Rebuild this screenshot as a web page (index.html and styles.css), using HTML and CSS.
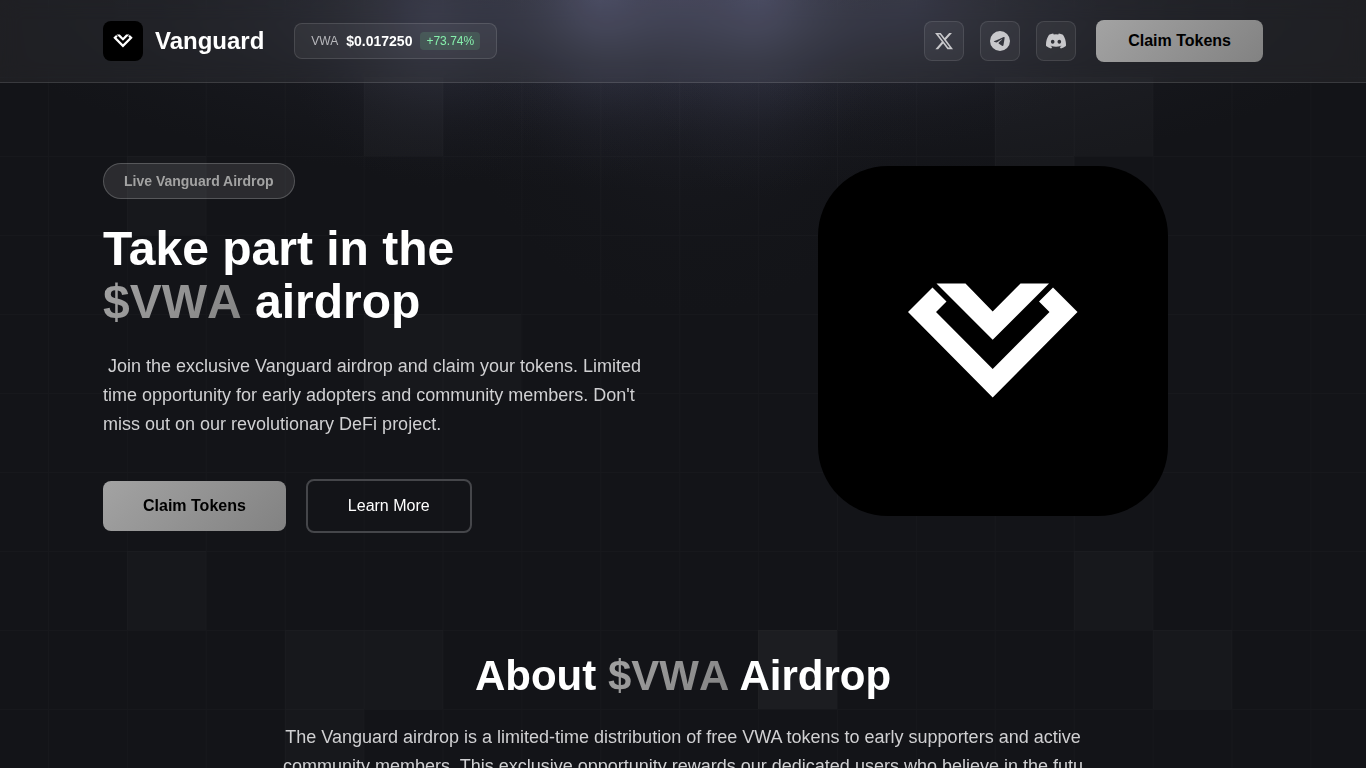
FILE: index.html
```
<!DOCTYPE html>
<html lang="en">
<head>
<meta charset="utf-8">
<meta name="viewport" content="width=device-width, initial-scale=1">
<title>Vanguard Airdrop</title>
<link rel="stylesheet" href="styles.css">
</head>
<body>
<svg class="backdrop" viewBox="0 0 1366 768" preserveAspectRatio="xMidYMin slice" aria-hidden="true">
  <defs>
    <pattern id="grid" x="48" y="77" width="78.9" height="79" patternUnits="userSpaceOnUse">
      <path d="M0 .5H79M.5 0V79" stroke="#fff" stroke-opacity=".014" fill="none"/>
    </pattern>
    <radialGradient id="glow">
      <stop offset="0" stop-color="#62648a" stop-opacity=".62"/>
      <stop offset=".35" stop-color="#50536e" stop-opacity=".34"/>
      <stop offset=".7" stop-color="#404258" stop-opacity=".11"/>
      <stop offset="1" stop-color="#303244" stop-opacity="0"/>
    </radialGradient>
  </defs>
  <rect width="1366" height="768" fill="#131418"/>
  <g fill="url(#glow)">
    <ellipse cx="680" cy="0" rx="720" ry="190" fill-opacity=".75"/>
    <ellipse cx="600" cy="-20" rx="130" ry="200" fill-opacity=".7"/>
    <ellipse cx="760" cy="-20" rx="130" ry="220" fill-opacity=".65"/>
    <ellipse cx="430" cy="20" rx="150" ry="170" fill-opacity=".36"/>
    <ellipse cx="910" cy="0" rx="200" ry="150" fill-opacity=".25"/>
    <ellipse cx="690" cy="60" rx="240" ry="260" fill-opacity=".18"/>
  </g>
  <rect width="1366" height="768" fill="url(#grid)"/>
  <g fill="#fff" fill-opacity=".018">
    <path d="M127 156h79v79h-79zM364 314h157v79H364zM127 551h79v79h-79zM1074 551h79v79h-79zM285 630h158v79H285zM285 709h79v59h-79zM1153 630h79v79h-79z"/>
    <path d="M364 77h79v79h-79zM995 77h158v79H995zM995 156h79v79h-79z" fill-opacity=".024"/>
    <path d="M758 630h79v79h-79z" fill-opacity=".04"/>
  </g>
</svg>

<header class="header">
  <div class="container header-row">
    <div class="brand-group">
      <a class="brand" href="#">
        <svg class="brand-mark" viewBox="0 0 350 350" aria-hidden="true"><use href="#mark"/></svg>
        <span>Vanguard</span>
      </a>
      <div class="price">
        <span class="price-name">VWA</span>
        <span class="price-value">$0.017250</span>
        <span class="price-change">+73.74%</span>
      </div>
    </div>
    <div class="actions">
      <nav class="social" aria-label="Social">
        <a href="#" aria-label="X"><svg viewBox="0 0 24 24"><path d="M18.244 2.25h3.308l-7.227 8.26 8.502 11.24H16.17l-5.214-6.817L4.99 21.75H1.68l7.73-8.835L1.254 2.25H8.08l4.713 6.231zm-1.161 17.52h1.833L7.084 4.126H5.117z"/></svg></a>
        <a href="#" aria-label="Telegram"><svg viewBox="0 0 24 24"><path d="M11.944 0A12 12 0 0 0 0 12a12 12 0 0 0 12 12 12 12 0 0 0 12-12A12 12 0 0 0 12 0a12 12 0 0 0-.056 0zm4.962 7.224c.1-.002.321.023.465.14a.506.506 0 0 1 .171.325c.016.093.036.306.02.472-.18 1.898-.962 6.502-1.36 8.627-.168.9-.499 1.201-.82 1.23-.696.065-1.225-.46-1.9-.902-1.056-.693-1.653-1.124-2.678-1.8-1.185-.78-.417-1.21.258-1.91.177-.184 3.247-2.977 3.307-3.23.007-.032.014-.15-.056-.212s-.174-.041-.249-.024c-.106.024-1.793 1.14-5.061 3.345-.48.33-.913.49-1.302.48-.428-.008-1.252-.241-1.865-.44-.752-.245-1.349-.374-1.297-.789.027-.216.325-.437.893-.663 3.498-1.524 5.83-2.529 6.998-3.014 3.332-1.386 4.025-1.627 4.476-1.635z"/></svg></a>
        <a href="#" aria-label="Discord"><svg viewBox="0 0 24 24"><path d="M20.317 4.37a19.791 19.791 0 0 0-4.885-1.515.074.074 0 0 0-.079.037c-.21.375-.444.864-.608 1.25a18.27 18.27 0 0 0-5.487 0 12.64 12.64 0 0 0-.617-1.25.077.077 0 0 0-.079-.037A19.736 19.736 0 0 0 3.677 4.37a.07.07 0 0 0-.032.027C.533 9.046-.32 13.58.099 18.057a.082.082 0 0 0 .031.057 19.9 19.9 0 0 0 5.993 3.03.078.078 0 0 0 .084-.028c.462-.63.874-1.295 1.226-1.994a.076.076 0 0 0-.041-.106 13.107 13.107 0 0 1-1.872-.892.077.077 0 0 1-.008-.128c.126-.094.252-.192.372-.291a.074.074 0 0 1 .077-.01c3.928 1.793 8.18 1.793 12.062 0a.074.074 0 0 1 .078.009c.12.099.246.198.373.292a.077.077 0 0 1-.006.127 12.299 12.299 0 0 1-1.873.892.077.077 0 0 0-.041.107c.36.698.772 1.362 1.225 1.993a.076.076 0 0 0 .084.028 19.839 19.839 0 0 0 6.002-3.03.077.077 0 0 0 .032-.054c.5-5.177-.838-9.674-3.549-13.66a.061.061 0 0 0-.031-.03zM8.02 15.33c-1.183 0-2.157-1.085-2.157-2.419 0-1.333.956-2.419 2.157-2.419 1.21 0 2.176 1.096 2.157 2.42 0 1.333-.956 2.418-2.157 2.418zm7.975 0c-1.183 0-2.157-1.085-2.157-2.419 0-1.333.955-2.419 2.157-2.419 1.21 0 2.176 1.096 2.157 2.42 0 1.333-.946 2.418-2.157 2.418z"/></svg></a>
      </nav>
      <button class="btn btn-primary btn-small" type="button">Claim Tokens</button>
    </div>
  </div>
</header>

<main>
  <section class="container hero">
    <div class="hero-copy">
      <span class="pill">Live Vanguard Airdrop</span>
      <h1>Take part in the<br><span class="ticker">$VWA</span> airdrop</h1>
      <p>&nbsp;Join the exclusive Vanguard airdrop and claim your tokens. Limited time opportunity for early adopters and community members. Don't miss out on our revolutionary DeFi project.</p>
      <div class="hero-buttons">
        <button class="btn btn-primary" type="button">Claim Tokens</button>
        <button class="btn btn-outline" type="button">Learn More</button>
      </div>
    </div>
    <div class="hero-visual">
      <svg class="hero-logo" viewBox="0 0 350 350" role="img" aria-label="Vanguard logo">
        <g id="mark">
          <path d="M118.500 117.500H147.500L174.700 145.500L202.500 117.500H231L174.700 173.800Z"/>
          <path d="M114.500 121.500L128.500 135.500L118 146L174.700 203L231.500 146L221 135.500L235 121.500L259.500 146L174.700 231.500L90 146Z"/>
        </g>
      </svg>
    </div>
  </section>

  <section class="container about">
    <h2>About <span class="ticker">$VWA</span> Airdrop</h2>
    <p>The Vanguard airdrop is a limited-time distribution of free VWA tokens to early supporters and active community members. This exclusive opportunity rewards our dedicated users who believe in the futu</p>
  </section>
</main>
</body>
</html>
```
FILE: styles.css
```
* {
  box-sizing: border-box;
  margin: 0;
  padding: 0;
}

body {
  background: #131418;
  color: #fff;
  font-family: "Liberation Sans", Arial, sans-serif;
  overflow-x: hidden;
}

a {
  color: inherit;
  text-decoration: none;
}

.backdrop {
  position: fixed;
  inset: 0;
  z-index: -1;
  width: 100%;
  height: 100%;
}

.container {
  width: 100%;
  max-width: 1200px;
  margin: 0 auto;
  padding: 0 20px;
}

.header {
  padding: 20px 0;
  background: rgba(255, 255, 255, 0.05);
  border-bottom: 1px solid rgba(255, 255, 255, 0.12);
  backdrop-filter: blur(10px);
}

.header-row,
.brand-group,
.brand,
.price,
.actions,
.social,
.hero-buttons {
  display: flex;
  align-items: center;
}

.header-row {
  justify-content: space-between;
}

.brand-group {
  gap: 30px;
}

.brand {
  gap: 12px;
  font-size: 24px;
  font-weight: 700;
}

.brand-mark {
  width: 40px;
  height: 40px;
  border-radius: 8px;
  background: #000;
  fill: #fff;
}

.price {
  gap: 8px;
  padding: 8px 16px;
  border: 1px solid rgba(255, 255, 255, 0.12);
  border-radius: 8px;
  background: rgba(255, 255, 255, 0.05);
  font-size: 12px;
}

.price-name {
  color: #b8b8bc;
}

.price-value {
  font-size: 14px;
  font-weight: 700;
}

.price-change {
  padding: 2px 6px;
  border-radius: 4px;
  background: rgba(110, 210, 140, 0.17);
  color: #86efac;
  line-height: 14px;
}

.actions {
  gap: 20px;
}

.social {
  gap: 16px;
}

.social a {
  display: grid;
  place-items: center;
  width: 40px;
  height: 40px;
  border: 1px solid rgba(255, 255, 255, 0.1);
  border-radius: 8px;
  background: rgba(255, 255, 255, 0.05);
}

.social svg {
  width: 20px;
  height: 20px;
  fill: #c8c8cb;
}

.btn {
  padding: 16px 40px;
  border: 0;
  border-radius: 8px;
  color: #fff;
  font-family: inherit;
  font-size: 16px;
  line-height: 18px;
  cursor: pointer;
}

.btn-primary {
  background: linear-gradient(135deg, #a3a3a3, #828282);
  color: #000;
  font-weight: 700;
}

.btn-small {
  padding: 12px 32px;
}

.btn-outline {
  border: 2px solid #45464a;
  background: transparent;
}

.hero {
  display: grid;
  grid-template-columns: 1fr 1fr;
  align-items: center;
  gap: 80px;
  padding-top: 80px;
  padding-bottom: 80px;
}

.hero-copy {
  display: flex;
  flex-direction: column;
  align-items: flex-start;
}

.pill {
  padding: 9px 20px;
  border: 1px solid rgba(255, 255, 255, 0.2);
  border-radius: 24px;
  background: rgba(255, 255, 255, 0.1);
  color: #a3a3a3;
  font-size: 14px;
  font-weight: 700;
  line-height: 16px;
}

h1 {
  margin: 23px 0 24px;
  font-size: 48px;
  line-height: 53px;
}

.ticker {
  display: inline-block;
  background: linear-gradient(135deg, #a3a3a3, #828282);
  background-clip: text;
  -webkit-background-clip: text;
  color: transparent;
  font-kerning: none;
}

.hero p,
.about p {
  color: #d0d0d2;
  font-size: 18px;
  line-height: 29px;
}

.hero-buttons {
  gap: 20px;
  margin-top: 40px;
}

.hero-visual {
  display: flex;
  justify-content: center;
  padding-bottom: 15px;
}

.hero-logo {
  width: 350px;
  max-width: 100%;
  border-radius: 70px;
  background: #000;
  fill: #fff;
}

.about {
  padding-top: 39px;
  text-align: center;
}

h2 {
  margin-bottom: 23px;
  font-size: 42px;
  line-height: 48px;
}

.about p {
  max-width: 802px;
  margin: 0 auto;
}

@media (max-width: 800px) {
  .hero {
    grid-template-columns: 1fr;
  }

  .header-row {
    flex-wrap: wrap;
    gap: 20px;
  }
}
```
